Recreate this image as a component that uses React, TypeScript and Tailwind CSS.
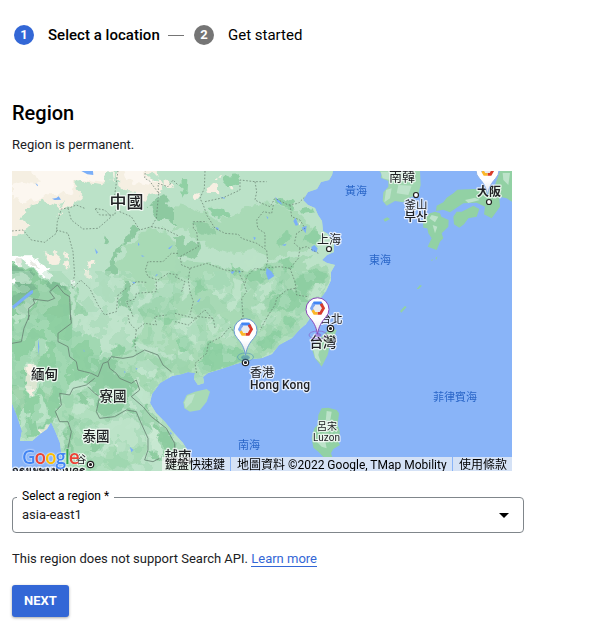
import React from "react";

const MAINLAND =
  "M0 0H321L320 4L317 9L309 11L305 18L296 21L291 29L296 34L303 37L306 44L310 50L311 60L316 63L322 72L322 81L315 84L310 89L315 92L323 94L319 101L319 109L314 120L308 128L303 136L298 147L294 153L287 159L280 167L267 174L260 183L250 187L241 188L231 191L224 193L206 199L196 202L191 206L192 212L186 214L182 208L183 202L176 201L170 203L160 205L148 212L140 223L138 232L144 242L153 251L161 261L171 272L177 282L180 300H52L50 288L48 272L44 262L39 251L35 258L28 263L20 270L8 270L10 260L5 245L0 232Z";

type Patch = { fill: string; d: string };

const northWest: Patch[] = [
  { fill: "#f5efe2", d: "M-10 -10H318L317 48L282 58L227 48L207 40L203 78L222 98L188 122L178 130L160 130L145 122L102 104L87 118L47 130L52 145L34 160L58 180L50 204L-10 210Z" },
  { fill: "#fcf7f0", d: "M60 -10H312L314 40L282 50L225 42L198 50L196 75L182 92L150 85L110 90L85 108L60 112L12 100V60L45 50L90 60L105 42L65 24Z" },
  { fill: "#f5efe2", d: "M325 -10H442L450 35L466 58L462 78L425 85L412 104L395 102L380 80L350 78L328 60ZM470 50L495 58L490 70L470 68Z" },
  { fill: "#fcf7f0", d: "M335 -10H412V42L440 48L425 62L390 58L355 42Z" },
  { fill: "#bde3ca", d: "M285 25L312 20L315 50L300 62L292 50ZM415 30L445 25L452 50L428 44ZM150 118L172 112L165 124Z" },
  { fill: "#8dc9a0", d: "M375 180L405 190L370 222L340 252L320 285L335 310L312 330L290 322L310 280L345 235ZM290 212L305 220L298 238L286 230ZM425 125L455 90L485 98L475 120L510 138V178L475 165L445 160ZM350 345L370 370L360 400L388 410L368 430L340 415L325 430L345 375Z" },
  { fill: "#a8dab5", d: "M405 198L450 190L490 215L510 255V350L450 350L440 395L390 390L385 350L345 355L320 300L350 265L340 240L380 232Z" },
  { fill: "#9bd4ac", d: "M400 420L450 395L510 400V465H390ZM200 360L215 380L205 405L240 440L200 465Z" },
  { fill: "#8ccc9e", d: "M0 285L45 300L85 320L105 345L140 350L185 365L190 465H0Z" },
  { fill: "#7cb992", d: "M0 300L40 305L80 330L70 345L35 322L0 345ZM15 355L55 340L90 375L60 390L30 425L0 435V405L38 380ZM110 345L180 365L182 380L150 365L125 375Z" },
  { fill: "#b0d8bd", d: "M0 325L50 330L75 350L50 358L30 350L0 372ZM25 440L60 400L90 405L55 440L60 465H35Z" },
  { fill: "#ffffff", d: "M0 290L20 275L40 278L60 270L85 280L98 300L125 315L134 330L112 340L85 315L65 300L45 285L35 300ZM8 350L22 338L32 345L20 360ZM190 345L200 340L203 358L192 363Z" },
  { fill: "#e8e9e3", d: "M62 282L80 290L88 306L70 298ZM24 288L42 285L45 294L27 297Z" },
  { fill: "#f7efe2", d: "M110 262L130 265L155 282L155 298L135 300L120 288ZM168 262L182 270L183 285L170 280ZM168 292L181 288L183 305L172 303ZM225 318L250 312L248 340L230 333ZM238 288L260 282L258 298L243 302ZM143 144L158 150L167 145L164 153L147 150Z" },
];

const east: Patch[] = [
  { fill: "#a9dab6", d: "M85 140L130 170L185 150L210 128L260 115L310 120L355 130L385 155L400 180L435 210L425 245L370 260L285 280L240 255L185 265L110 250L85 230L55 220L25 180L0 200V120L40 125Z" },
  { fill: "#90d0a4", d: "M102 130L130 125L155 130L162 160L130 165L115 150ZM15 42L40 45L38 75L22 98ZM150 35L195 30L190 55L155 65L148 48ZM290 100L320 100L352 115L360 128L310 118ZM375 130L405 125L418 145L385 150ZM320 215L345 195L350 220L315 245L300 235ZM380 225L420 195L445 215L425 235Z" },
  { fill: "#93cda4", d: "M0 210L22 218L35 240L70 230L80 260L50 280L0 270ZM50 170L95 175L125 205L100 210L75 198ZM10 285L45 295L30 335L0 330Z" },
  { fill: "#a7d9b5", d: "M0 280L50 290L110 295L160 310L215 320L300 290L400 270L450 290L470 340L440 400L410 470H0Z" },
  { fill: "#91d0a4", d: "M208 330L260 308L295 308L305 325L260 350L220 350ZM310 285L345 275L355 300L330 320L310 302ZM360 345L400 310L455 325L450 350L410 365L395 395L360 375ZM310 385L350 375L390 395L410 410L415 465H335L275 450L280 415ZM65 350L90 330L95 370L60 390ZM170 300L195 310L190 330L173 325ZM300 360L325 340L315 380L278 402Z" },
  { fill: "#bce3c8", d: "M255 355L288 352L290 375L260 405L230 400ZM205 290L235 270L245 295L220 310ZM110 380L150 370L162 390L130 405ZM15 370L45 350L38 395L18 405ZM235 425L265 410L260 465H230ZM175 340L205 350L200 400L170 440L150 420L175 385ZM380 290L440 275L460 300L400 305ZM420 360L455 350L430 410L400 400Z" },
  { fill: "#f7efe2", d: "M48 90L75 78L80 95L65 103ZM95 80L110 55L128 55L130 82ZM120 32L132 35L128 45ZM165 65L175 62L178 72L167 80ZM367 172L380 175L377 184Z" },
];

const southWest: Patch[] = [
  { fill: "#8fd0a2", d: "M0 0H190V30L215 65L275 110L260 165L220 190L175 215L150 260L148 310L120 330L75 368L40 370L30 310L0 265Z" },
  { fill: "#b8e2c5", d: "M65 120L85 80L115 75L120 110L90 125L75 175L100 200L90 235L65 245L50 210ZM45 265L60 305L50 355L65 375L40 370L36 330ZM20 20L45 12L48 0H12ZM85 240L110 250L120 310L92 350L85 320L100 290Z" },
  { fill: "#a2d5ae", d: "M18 210L45 215L55 265L35 285L20 250ZM65 140L95 105L95 135L75 170ZM105 190L132 190L128 260L105 235Z" },
  { fill: "#f8f0e4", d: "M55 160L70 142L85 150V190L90 210L82 235L65 238L52 210ZM92 352L112 340L126 330L120 345L95 362ZM340 45L352 38L358 45L345 53Z" },
  { fill: "#bde3c9", d: "M190 0H395L410 30L385 60L365 105L310 95L295 130L270 100L255 55L225 65L215 35L195 20Z" },
  { fill: "#a8dab5", d: "M395 0H510V130L465 110L380 80L410 30Z" },
  { fill: "#90d0a3", d: "M225 65L248 55L275 75L280 100L265 135L235 120L215 105ZM310 100L330 85L350 100L345 120L315 130ZM460 10L500 5L495 30L460 35ZM370 95L380 68L395 65L390 85Z" },
  { fill: "#a5d9b3", d: "M365 105L410 108L465 125L510 145V172L455 205L425 240L395 205L350 190L310 135Z" },
  { fill: "#bee4ca", d: "M370 150L415 135L450 155L430 195L395 170ZM370 185L395 195L410 230L440 280L420 280L365 210Z" },
  { fill: "#8fcda2", d: "M265 140L310 130L365 180L395 215L355 250L400 310L350 280L285 320L260 290L275 240L235 200Z" },
  { fill: "#a8dbb6", d: "M160 245L240 215L270 240L265 300L290 315L350 285L390 315L420 380L405 440L300 468H195L170 345L150 300Z" },
  { fill: "#bce3c8", d: "M190 275L225 260L240 280L220 300L190 290ZM300 325L350 290L395 330L420 385L360 410L325 380L280 425L240 385L215 375L235 335ZM200 225L220 220L215 255L200 248ZM245 240L260 245L255 280L243 270Z" },
  { fill: "#8fcda1", d: "M170 340L190 300L220 315L200 345L195 440L170 425ZM210 235L230 230L245 255L235 270L215 260ZM240 360L285 365L290 395L250 410ZM410 270L450 310L500 380L495 430L440 435L420 415L450 400L430 350L390 310Z" },
  { fill: "#c9e9d2", d: "M430 325L455 350L440 375L470 410L455 425L430 405ZM320 385L355 382L350 405L325 412Z" },
];

const south: Patch[] = [
  { fill: "#a8dab5", d: "M0 -10H420L370 60L300 110L200 145L60 190L0 190Z" },
  { fill: "#90d1a4", d: "M95 75L145 85L200 110L215 130L160 155L85 175L60 160L80 130ZM250 70L300 45L330 55L320 80L285 100L255 110ZM345 0H385L350 40L320 20ZM0 75L35 60L55 90L20 110Z" },
  { fill: "#bce3c8", d: "M0 0L55 10L80 45L65 90L35 55L0 65ZM135 40L165 20L175 55L150 75ZM90 20L135 5L150 20L110 65ZM255 20L310 0L290 30L250 40ZM0 105L45 110L55 145L15 135Z" },
  { fill: "#a5d9b2", d: "M0 155L55 145L80 165L35 170L0 180Z" },
];

const lakes = [
  { t: "translate(-4 -6) scale(.333333)", d: "M220 18H255L256 30L238 28ZM132 101L145 99L152 94L159 104L140 105ZM82 54L90 60L88 64ZM12 424L38 402L67 378L75 375V384L45 408L16 432ZM260 250L270 262L265 267ZM390 232L395 240L390 242ZM400 270L410 274L402 275ZM440 335L447 326L449 330ZM480 250L495 240L485 253ZM372 350L383 352L378 357Z" },
  { t: "translate(163 -6) scale(.333333)", d: "M275 308L290 320L298 333L280 345L273 325ZM355 168L362 158L370 180L362 182ZM409 246L418 240L428 250L425 262L410 258ZM300 95L318 112L322 120L307 110ZM120 187L130 188L131 197ZM235 215L243 218L238 226ZM135 95L150 98L148 102ZM166 320L180 318L172 328ZM320 240L335 236L330 243ZM65 410L77 398L72 410ZM380 188L395 182L392 205ZM274 152L280 158L277 162ZM190 315L197 320L193 325Z" },
  { t: "translate(-4 144) scale(.333333)", d: "M226 103L230 108L228 112ZM348 167L353 171L350 175ZM365 395L377 405L370 412ZM485 350L492 355L488 360ZM382 160L388 160L387 165ZM90 70L94 95L92 120L90 95Z" },
];

const borders = [
  { t: "translate(-4 -6) scale(.333333)", d: "M12 198L45 195L70 225L110 232L145 205L148 170L160 132L185 128L205 120L230 130M145 195L180 205L195 260L200 330L195 350M180 130L190 165L225 192L270 190L310 155L290 135L260 130L275 150L320 150L330 110L320 90L330 18M335 140L370 155L395 195L430 185L445 160L452 85L425 48L410 40L412 18M452 85L450 55L480 65L495 45L510 60M430 185L470 192L510 212M510 265L490 265L465 290L420 290L412 315L420 335L450 345L480 325L510 330M445 350L445 380L385 385L382 402L355 410L370 440L375 455M365 365L385 350L415 352M355 370L330 390L325 440L290 450L270 420L245 370L218 345L195 370L190 355" },
  { t: "translate(163 -6) scale(.333333)", d: "M90 18L88 70L75 100L85 120L95 150L120 190L150 205L190 208L200 220L245 235L275 255L278 290L270 315L240 310L215 335L210 355M90 110L145 98L195 75L195 45L240 50L275 50M240 50L245 80L240 105L260 115L285 125L300 100L340 120L370 115L390 95M295 120L290 145L265 140L245 165L248 190L270 205L270 245M345 120L350 155L375 165L390 190L365 205L358 235L375 250L395 245L430 265M375 250L370 280L345 310L315 305L280 308M345 310L360 350L365 390L400 395M360 370L335 375L305 400L300 420L280 450M195 330L205 350L215 380L200 400L205 465M205 320L150 315L95 295L45 310L20 300L15 275L70 245L65 200L55 190L55 170L95 170M45 310L40 345L45 380L55 410L45 450M0 335L30 350L20 380M0 445L60 460L90 435L115 465" },
  { t: "translate(163 144) scale(.333333)", d: "M205 0L180 55L165 35L140 65L100 85L95 115L60 145L65 175M280 0L255 45M0 20L40 30L70 5L115 10L120 40" },
  { t: "translate(-4 144) scale(.333333)", d: "M360 0L365 25L385 45L410 25L445 30L440 5L475 0M385 45L380 85L385 115" },
];

const frontiers = [
  { t: "translate(-4 -6) scale(.333333)", d: "M62 465V430L80 415L75 402L95 405L120 408L140 400L125 380L148 360L168 385L185 395L188 465" },
  { t: "translate(-4 144) scale(.333333)", d: "M12 85L40 80L48 40L65 0M188 0L190 25L150 55L150 80L180 95L185 125L205 140L210 165L230 170L250 175L270 185L285 145L300 140L310 125L345 130L375 125L410 105L450 120L465 150L490 170M300 140L305 160L325 175L335 190L370 205L385 195L395 225L370 245L405 275L430 305L475 340L500 385V430M260 190L235 210L195 220L185 240L155 235L160 270L142 290L155 320L180 320L190 350L180 400L190 440M240 215L260 235L275 245L265 290L275 310L320 305L355 285L385 290L395 315L420 370L420 405L410 435L435 440L455 430" },
];

const labels = [
  { x: 114.5, y: 37, s: 17, text: "中國", w: 500 },
  { x: 317, y: 73, s: 12, text: "上海", w: 400 },
  { x: 390, y: 9.5, s: 13, text: "南韓", w: 400 },
  { x: 404, y: 38, s: 11.5, text: "釜山", w: 400 },
  { x: 404, y: 49.5, s: 12.5, text: "부산", w: 500 },
  { x: 477, y: 25, s: 12, text: "大阪", w: 700 },
  { x: 319, y: 152, s: 11.5, text: "台北", w: 400 },
  { x: 311, y: 176, s: 13.5, text: "台灣", w: 500 },
  { x: 32.5, y: 208, s: 13.5, text: "緬甸", w: 500 },
  { x: 101, y: 230, s: 13.5, text: "寮國", w: 500 },
  { x: 84, y: 270, s: 13.5, text: "泰國", w: 500 },
  { x: 166, y: 290, s: 13.5, text: "越南", w: 500 },
  { x: 250, y: 206, s: 12, text: "香港", w: 400 },
  { x: 315, y: 259, s: 10, text: "呂宋", w: 400 },
  { x: 69, y: 292, s: 10.5, text: "谷", w: 400 },
];

const seas = [
  { x: 344, y: 24, s: 11, text: "黃海" },
  { x: 368, y: 93, s: 11, text: "東海" },
  { x: 237, y: 278, s: 11, text: "南海" },
  { x: 443, y: 230, s: 11, text: "菲律賓海" },
];

const MAP_FONT = "font-['Roboto','Noto_Sans_CJK_TC','Noto_Sans_CJK_KR',sans-serif]";

function Patches({ items, transform }: { items: Patch[]; transform: string }) {
  return (
    <g transform={transform}>
      {items.map((p) => (
        <path key={p.d} d={p.d} fill={p.fill} />
      ))}
    </g>
  );
}

function Pin({ x, y, stroke }: { x: number; y: number; stroke: string }) {
  return (
    <g transform={`translate(${x} ${y})`}>
      <path d="M0 30C-1.500 22-4 18-8 13.500A11.500 11.500 0 1 1 8 13.500C4 18 1.500 22 0 30Z" transform="translate(0 1)" fill="url(#pin)" stroke={stroke} strokeWidth="1" />
      <circle cy="5.200" r="4" fill="#e9ebef" />
      <g fill="none" strokeWidth="2.800">
        <path d="M-4.700 2.800L-3 0H3L4.700 2.800" stroke="#4285f4" />
        <path d="M3.500 0.800L6 5.200L3 10.400H0" stroke="#d93c2b" />
        <path d="M0 10.400H-3L-5 7" stroke="#fbb829" />
        <path d="M-5 7L-6 5.200L-3.500 0.800" stroke="#7ba5f2" />
      </g>
    </g>
  );
}

function RegionMap() {
  return (
    <div className="relative h-[300px] w-[500px] overflow-hidden bg-[#89b4f8]">
      <svg className={`block ${MAP_FONT}`} width="500" height="300" viewBox="0 0 500 300">
        <defs>
          <clipPath id="land">
            <path d={MAINLAND} />
          </clipPath>
          <linearGradient id="pin" x1="0" y1="0" x2="0" y2="1">
            <stop offset="0" stopColor="#fff" />
            <stop offset="0.600" stopColor="#fff" />
            <stop offset="1" stopColor="#dcdfe8" />
          </linearGradient>
          <filter id="rough" x="-20" y="-20" width="540" height="340" filterUnits="userSpaceOnUse" colorInterpolationFilters="sRGB">
            <feTurbulence type="fractalNoise" baseFrequency="0.12" numOctaves="2" seed="4" result="n" />
            <feDisplacementMap in="SourceGraphic" in2="n" scale="11" xChannelSelector="R" yChannelSelector="G" />
          </filter>
          <filter id="light" x="0" y="0" width="100%" height="100%" colorInterpolationFilters="sRGB">
            <feTurbulence type="fractalNoise" baseFrequency="0.05" numOctaves="3" seed="8" />
            <feColorMatrix values="0 0 0 0 0.76  0 0 0 0 0.9  0 0 0 0 0.81  0 3 0 0 -1" />
            <feComponentTransfer>
              <feFuncA type="discrete" tableValues="0 0 0 .35 .35" />
            </feComponentTransfer>
          </filter>
          <filter id="dark" x="0" y="0" width="100%" height="100%" colorInterpolationFilters="sRGB">
            <feTurbulence type="fractalNoise" baseFrequency="0.06" numOctaves="3" seed="21" />
            <feColorMatrix values="0 0 0 0 0.52  0 0 0 0 0.79  0 0 0 0 0.61  3 0 0 0 -1" />
            <feComponentTransfer>
              <feFuncA type="discrete" tableValues="0 0 0 .25 .25" />
            </feComponentTransfer>
          </filter>
        </defs>

        <path d={MAINLAND} fill="#bbe2c8" />
        <g clipPath="url(#land)">
          <g filter="url(#rough)">
            <rect x="-20" y="-20" width="360" height="340" fill="#bbe2c8" />
            <Patches items={northWest} transform="translate(-4 -6) scale(.333333)" />
            <Patches items={east} transform="translate(163 -6) scale(.333333)" />
            <Patches items={south} transform="translate(163 144) scale(.333333)" />
            <Patches items={southWest} transform="translate(-4 144) scale(.333333)" />
          </g>
          <rect x="0" y="100" width="330" height="200" filter="url(#light)" />
          <rect x="0" y="100" width="330" height="200" filter="url(#dark)" />
          <g fill="#7baff8">
            {lakes.map((l) => (
              <path key={l.t} transform={l.t} d={l.d} />
            ))}
          </g>
        </g>

        <g transform="translate(163 144) scale(.333333)">
          <path fill="#a8dab5" d="M25 262L35 240L60 230L95 222L105 230L95 260L75 285L45 290L28 280Z" />
          <path fill="#bde3ca" d="M28 262L38 242L60 236L50 262L32 280Z" />
          <path fill="#9bd4ab" d="M410 100L425 80L450 55L470 40L485 45L478 65L465 90L458 120L440 155L432 145L420 130Z" />
          <path fill="#bde3ca" d="M415 100L440 80L430 120L438 145L420 128Z" />
          <path fill="#92d1a4" d="M430 300L440 280L460 278L485 285L492 295L488 330L495 350L490 380L495 390L475 402L468 415L472 426H445L430 410L415 398L410 370L418 340L428 330Z" />
          <path fill="#bde3ca" d="M455 288L470 290L465 320L475 345L450 340ZM420 375L450 375L455 400L440 395Z" />
        </g>
        <g transform="translate(328 -6) scale(.333333)">
          <path fill="#a0d6af" d="M118 18L125 28L122 38L145 48L145 65L130 82L128 108L140 122L165 108L190 112L205 100L235 88L242 60L240 18Z" />
          <path fill="#bde3ca" d="M122 20L155 20L150 45L128 40ZM138 75L155 70L150 100L133 112ZM175 60L215 62L205 90L170 85Z" />
          <path fill="#92d1a4" d="M516 18H480L465 60L440 75L400 72L352 74L340 85L320 98L310 112L290 122L288 138L310 134L330 142L370 115L410 113L435 125L432 148L455 160L480 125L478 95L500 100L516 110Z" />
          <path fill="#92d1a4" d="M340 155L350 140H365L400 122L418 132L410 155L385 160L372 178L358 188L342 178ZM248 165L270 145L285 140L300 145L304 155L326 165L325 185L305 205L310 220L300 230L290 255L263 245L275 220L265 205L262 190L250 188ZM130 163L142 157L150 162L135 170ZM230 372L240 360L246 362L236 372ZM180 438L195 423L200 426L184 443ZM273 285L280 283L276 288ZM286 280L292 274L290 284Z" />
          <path fill="#bde3ca" d="M488 24L510 24L505 60L490 45ZM275 150L295 155L285 172L268 160ZM278 180L292 185L285 205ZM375 105L405 98L420 105L385 114Z" />
        </g>

        <g fill="none" stroke="#62786a" strokeWidth="2.400" strokeDasharray="5 5" opacity=".85">
          {borders.map((b) => (
            <path key={b.t} transform={b.t} d={b.d} />
          ))}
        </g>
        <g fill="none" stroke="#6b8576" strokeWidth="2.600" strokeLinejoin="round">
          {frontiers.map((b) => (
            <path key={b.t} transform={b.t} d={b.d} />
          ))}
        </g>

        <g fill="#2a66c8" textAnchor="middle">
          {seas.map((l) => (
            <text key={l.text} x={l.x} y={l.y} fontSize={l.s}>{l.text}</text>
          ))}
        </g>
        <g fill="#202124" stroke="#fff" strokeWidth="2.500" strokeOpacity=".75" strokeLinejoin="round" paintOrder="stroke">
          <g textAnchor="middle">
            {labels.map((l) => (
              <text key={l.text} x={l.x} y={l.y} fontSize={l.s} fontWeight={l.w}>{l.text}</text>
            ))}
          </g>
          <text x="238" y="218" fontSize="12" fontWeight="500" textLength="60">Hong Kong</text>
          <text x="301" y="269.500" fontSize="10" textLength="27">Luzon</text>
          <text x="0" y="304" fontSize="11" fontWeight="700" textLength="73">กรุงเทพมหานคร</text>
        </g>
        <g fill="#fff" stroke="#222" strokeWidth="1.200">
          <circle cx="317" cy="78" r="2.500" />
          <circle cx="404" cy="24" r="2.500" />
          <circle cx="477" cy="31" r="2.500" />
          {[[233.500, 191.500], [318.500, 157.500], [78.500, 293.500]].map(([cx, cy]) => (
            <g key={cx}>
              <circle cx={cx} cy={cy} r="3.200" />
              <circle cx={cx} cy={cy} r="1" fill="#222" />
            </g>
          ))}
        </g>

        <g fill="none" stroke="#3d86bd" opacity=".5">
          <ellipse cx="233.500" cy="186" rx="8" ry="4" />
          <ellipse cx="233.500" cy="186.500" rx="4" ry="2" fill="#3478a8" />
        </g>
        <g fill="none" stroke="#8846b8" opacity=".5">
          <ellipse cx="306" cy="164" rx="9" ry="4" />
          <ellipse cx="306" cy="164" rx="3" ry="1.500" fill="#8846b8" />
        </g>
        <Pin x={233.500} y={153} stroke="#6a9bd0" />
        <Pin x={305.500} y={132} stroke="#8846b8" />
        <Pin x={475.500} y={-7} stroke="#8eb2e8" />
      </svg>

      <div className="absolute bottom-[1px] left-[10px] flex font-['Open_Sans',sans-serif] text-[19px] font-semibold leading-[26px] tracking-[-1.2px] [text-shadow:0_0_2px_white,0_0_1px_white]">
        <span className="text-[#4285f4]">G</span>
        <span className="text-[#ea4335]">o</span>
        <span className="text-[#fbbc04]">o</span>
        <span className="text-[#4285f4]">g</span>
        <span className="text-[#34a853]">l</span>
        <span className="text-[#ea4335]">e</span>
      </div>
      <div className="absolute bottom-0 right-0 flex h-[14px] gap-px whitespace-nowrap font-['Roboto','Noto_Sans_CJK_TC',sans-serif] text-[12px] leading-[16px] text-black">
        <span className="w-[68px] bg-[#f5f5f5]/70 pl-[3px]">鍵盤快速鍵</span>
        <span className="w-[221px] bg-[#f5f5f5]/70 pl-[6px]">地圖資料 ©2022 Google, TMap Mobility</span>
        <span className="w-[59px] bg-[#f5f5f5]/70 pl-[6px]">使用條款</span>
      </div>
    </div>
  );
}

export default function App() {
  return (
    <main className="h-[631px] w-[591px] overflow-hidden bg-white pl-3 pt-[25px] font-['Roboto',sans-serif] text-[13px] text-[#202124]">
      <header className="flex h-5 items-center pl-[2px] text-[15px] text-black">
        <span className="flex size-5 items-center justify-center rounded-full bg-[#3367d6] text-[13px] font-bold text-white">1</span>
        <span className="ml-[14px] w-[112px] whitespace-nowrap font-medium tracking-[0.03px]">Select a location</span>
        <span className="ml-2 h-px w-4 bg-[#757575]" />
        <span className="ml-[10px] flex size-5 items-center justify-center rounded-full bg-[#757575] text-[13px] font-bold text-white">2</span>
        <span className="ml-[14px]">Get started</span>
      </header>

      <h1 className="mt-[56px] text-[20px] font-medium leading-6 text-black">Region</h1>
      <p className="mb-[16px] mt-[10px] leading-5">Region is permanent.</p>

      <RegionMap />

      <fieldset className="mt-[18px] flex h-[44px] w-[512px] items-start justify-between rounded border border-[#80868b] px-[9px]">
        <legend className="ml-[-5px] px-[5px] pb-[2px] text-[12px] leading-[14px] text-black">Select a region *</legend>
        <span className="leading-5">asia-east1</span>
        <span className="mr-[5px] mt-[8px] border-x-[5px] border-t-[5px] border-x-transparent border-t-black" />
      </fieldset>

      <p className="mt-4 leading-5">
        This region does not support Search API.{" "}
        <a className="border-b border-[#3367d6] text-[#3367d6]">Learn more</a>
      </p>

      <button className="mt-4 h-8 w-[57px] rounded-[3px] bg-[#3367d6] text-[13px] font-bold text-white shadow-[0_1px_3px_rgba(0,0,0,0.35)]">NEXT</button>
    </main>
  );
}
